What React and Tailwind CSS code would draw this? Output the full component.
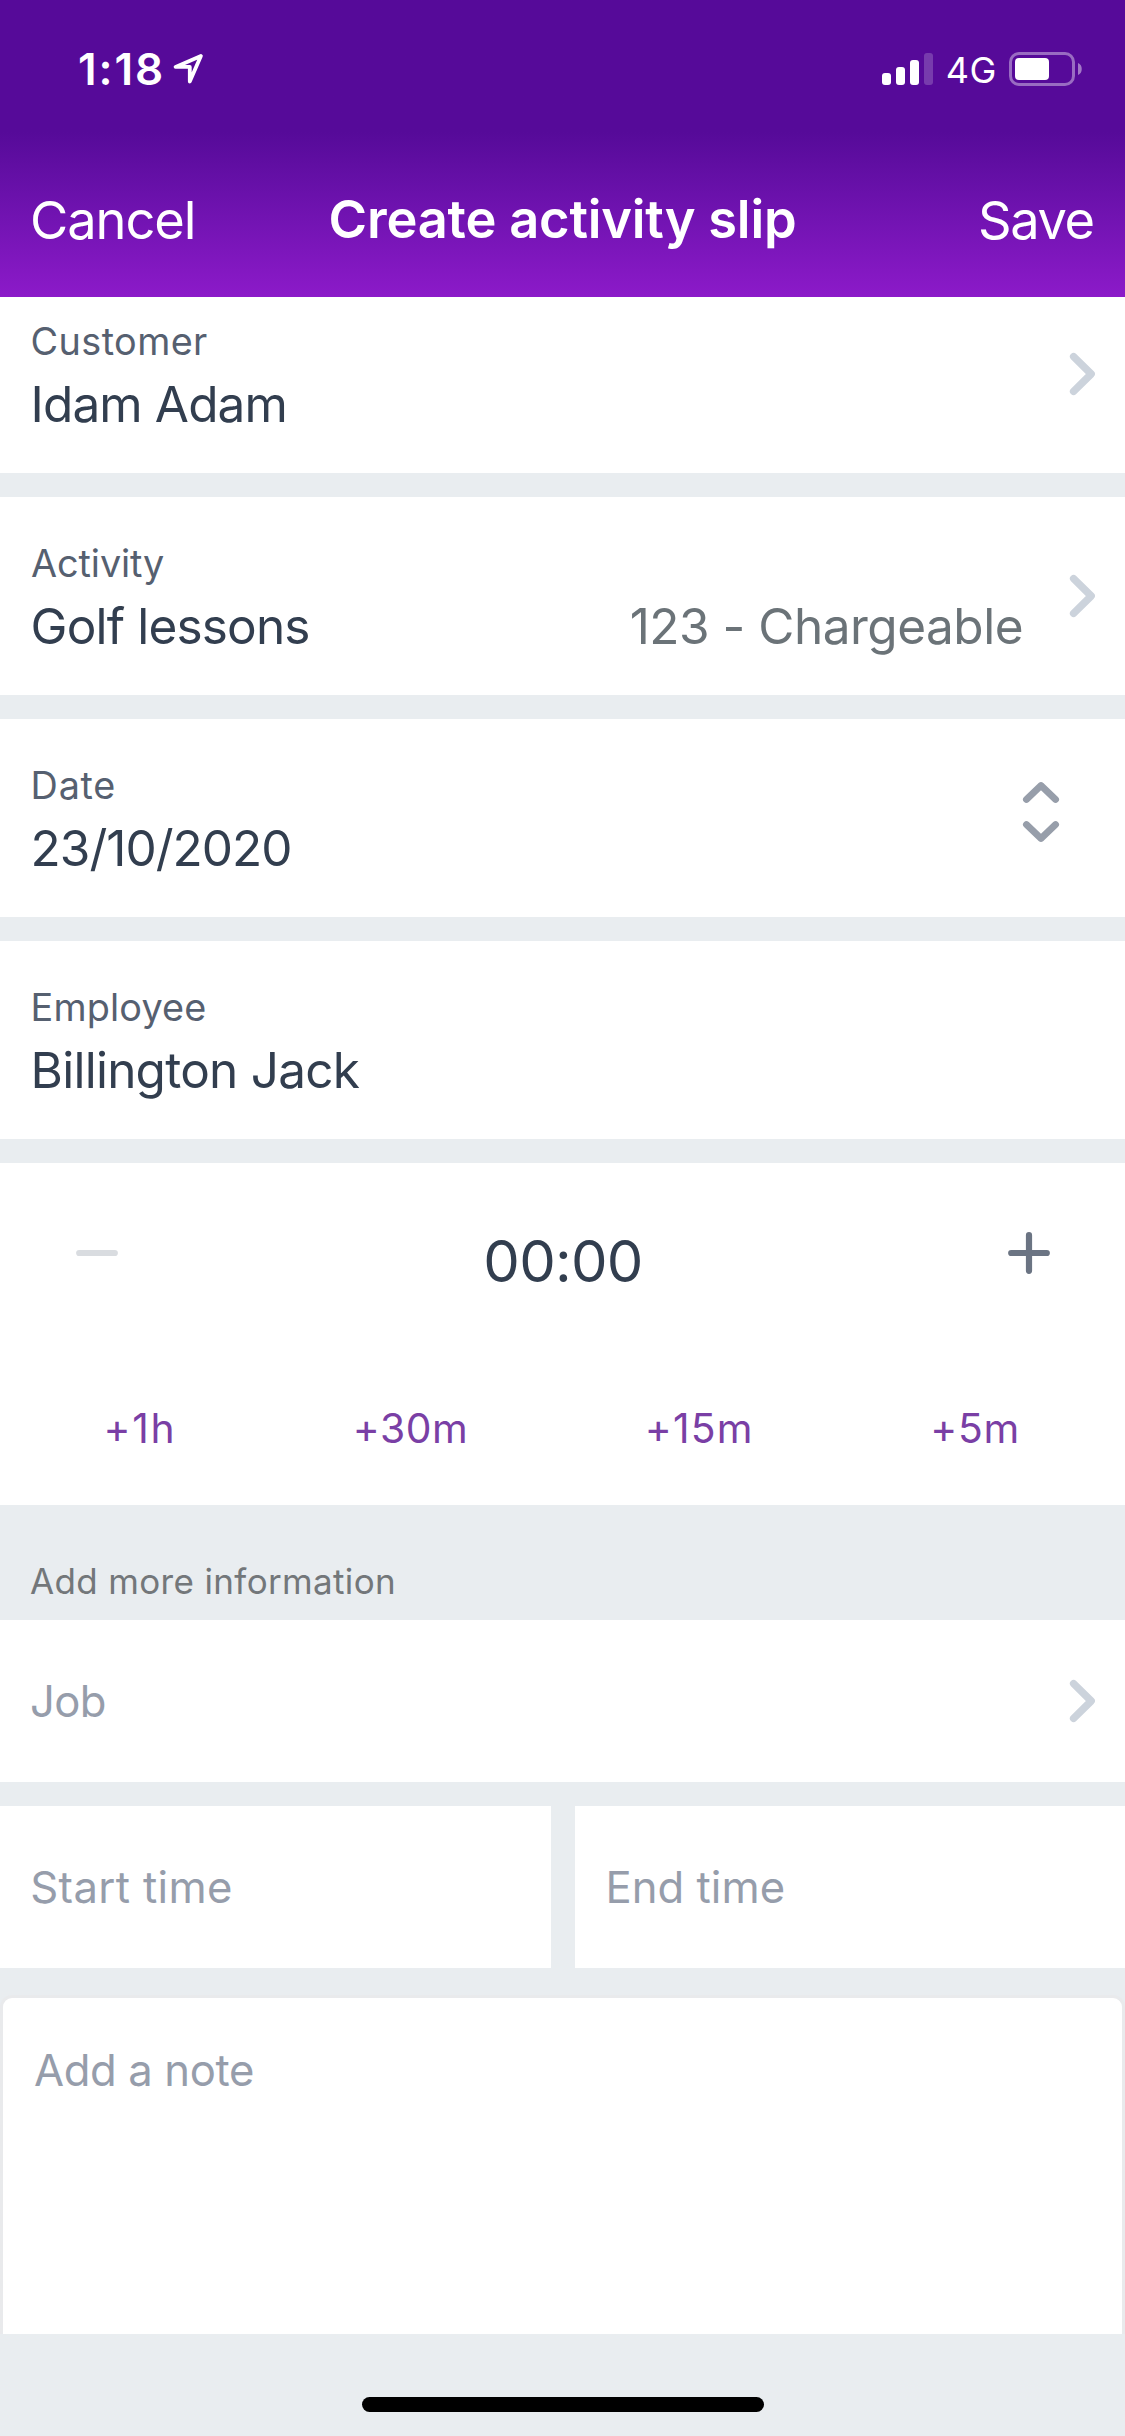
function LocationArrow() {
  return (
    <svg className="mt-[53px] ml-[7px] h-[32px] w-[32px]" viewBox="0 0 32 32" fill="none" stroke="#fff" strokeWidth="3.8" strokeLinejoin="round">
      <path d="M28.9 2.9 L3.6 13.9 L17.8 13.9 L17.8 28.6 Z" />
    </svg>
  );
}

function SignalBars() {
  return (
    <div className="mt-[53px] flex h-[32px] items-end gap-[5px]">
      <div className="h-[12px] w-[9px] rounded-[3px] bg-white" />
      <div className="h-[18px] w-[9px] rounded-[3px] bg-white" />
      <div className="h-[25px] w-[9px] rounded-[3px] bg-white" />
      <div className="h-[32px] w-[9px] rounded-[3px] bg-white/20" />
    </div>
  );
}

function Battery() {
  return (
    <svg className="mt-[52px] ml-[12px] h-[34px] w-[74px]" viewBox="0 0 74 34" fill="none">
      <rect x="1.5" y="1.5" width="63" height="31" rx="8.5" stroke="#fff" strokeOpacity="0.4" strokeWidth="3" />
      <rect x="6" y="6" width="34" height="22" rx="4" fill="#fff" />
      <path d="M69 11 C74 12.5 74 21.5 69 23 Z" fill="#fff" fillOpacity="0.45" />
    </svg>
  );
}

function ChevronRight() {
  return (
    <svg className="h-[44px] w-[28px] shrink-0" viewBox="0 0 28 44" fill="none" stroke="#ccd3dc" strokeWidth="7.4" strokeLinecap="round" strokeLinejoin="round">
      <path d="M4.6 4.6 L22.2 22 L4.6 39.4" />
    </svg>
  );
}

function UpDown() {
  return (
    <svg className="mb-[12px] h-[62px] w-[38px]" viewBox="0 0 38 62" fill="none" stroke="#979eaa" strokeWidth="6.8" strokeLinecap="round" strokeLinejoin="round">
      <path d="M4.4 18.5 L19 4.5 L33.6 18.5" />
      <path d="M4.4 43.5 L19 57.5 L33.6 43.5" />
    </svg>
  );
}

function Field({ label, labelClass, value, valueClass, className = "", children }) {
  return (
    <div className={`flex h-[198px] shrink-0 items-center bg-white pl-[30.6px] ${className}`}>
      <div className="mt-[42px] flex-1 self-start">
        <div className={`text-[37.8px] leading-[48px] text-[#566070] ${labelClass}`}>{label}</div>
        <div className={`mt-[9px] text-[49.5px] leading-[60px] text-[#323e4f] ${valueClass}`}>{value}</div>
      </div>
      {children}
    </div>
  );
}

export default function App() {
  return (
    <div className="flex h-[2436px] w-[1125px] flex-col overflow-hidden bg-[#e9edf0] font-['Inter',sans-serif] whitespace-nowrap">
      <header className="relative z-10 h-[297px] shrink-0 bg-linear-to-b from-[#560a99] from-[132px] to-[#8c1ac9] text-white">
        <div className="flex h-[132px] justify-between pr-[42px] pl-[78px]">
          <div className="flex">
            <span className="mt-[43px] text-[44px] leading-[52px] font-semibold tracking-[1.9px]">1:18</span>
            <LocationArrow />
          </div>
          <div className="flex">
            <SignalBars />
            <span className="mt-[48px] ml-[12.5px] text-[36px] leading-[44px] tracking-[0.6px]">4G</span>
            <Battery />
          </div>
        </div>
        <div className="grid grid-cols-[1fr_auto_1fr] px-[30px] pt-[55px] text-[52.4px] leading-[64px]">
          <span className="mt-px tracking-[-1.05px]">Cancel</span>
          <span className="font-semibold tracking-[-0.2px]">Create activity slip</span>
          <span className="mt-px pr-[1.5px] text-right tracking-[-1.43px]">Save</span>
        </div>
      </header>

      <Field label="Customer" labelClass="tracking-[0.4px]" value="Idam Adam" valueClass="tracking-[-0.88px]" className="-mt-[22px] pr-[28px]">
        <ChevronRight />
      </Field>

      <Field label="Activity" labelClass="pl-[0.5px] tracking-[-0.1px]" value="Golf lessons" valueClass="tracking-[-0.83px]" className="mt-[24px] pr-[28px]">
        <span className="mt-[99px] mr-[46px] self-start text-[49.5px] leading-[60px] tracking-[-0.49px] text-[#6b7378]">123 - Chargeable</span>
        <ChevronRight />
      </Field>

      <Field label="Date" labelClass="tracking-[0.76px]" value="23/10/2020" valueClass="tracking-[-0.97px]" className="mt-[24px] pr-[65px]">
        <UpDown />
      </Field>

      <Field label="Employee" labelClass="tracking-[0.16px]" value="Billington Jack" valueClass="tracking-[-0.76px]" className="mt-[24px]" />

      <section className="mt-[24px] h-[342px] shrink-0 bg-white">
        <div className="flex h-[240px] justify-between pr-[75px] pl-[76px]">
          <svg className="mt-[69px] h-[42px] w-[42px]" viewBox="0 0 42 42" stroke="#d9dce0" strokeWidth="6.2" strokeLinecap="round">
            <path d="M3.2 21 H38.8" />
          </svg>
          <span className="mt-[62px] text-[58px] leading-[72px] tracking-[-0.75px] text-[#323e4f]">00:00</span>
          <svg className="mt-[69px] h-[42px] w-[42px]" viewBox="0 0 42 42" stroke="#6b7483" strokeWidth="6.2" strokeLinecap="round">
            <path d="M3.2 21 H38.8 M21 3.2 V38.8" />
          </svg>
        </div>
        <div className="flex justify-between pr-[105px] pl-[103.5px] text-[40.8px] leading-[50px] text-[#7a3fa5]">
          <span className="tracking-[1.7px]">+1h</span>
          <span className="tracking-[0.57px]">+30m</span>
          <span className="tracking-[1.2px]">+15m</span>
          <span className="tracking-[0.75px]">+5m</span>
        </div>
      </section>

      <h2 className="h-[115px] shrink-0 pt-[54px] pl-[30px] text-[35px] leading-[44px] tracking-[0.35px] text-[#73777a]">Add more information</h2>

      <div className="flex h-[162px] shrink-0 items-center justify-between bg-white pr-[28px] pl-[30px] text-[43.6px] leading-[60px] text-[#969dab]">
        <span className="pt-[2px] tracking-[-0.61px]">Job</span>
        <ChevronRight />
      </div>

      <div className="mt-[24px] grid h-[162px] shrink-0 grid-cols-[551px_550px] gap-[24px] text-[43.6px] leading-[60px] text-[#969dab]">
        <div className="flex items-center bg-white pt-[2px] pl-[30.3px] tracking-[0.35px]">Start time</div>
        <div className="flex items-center bg-white pt-[2px] pl-[30.6px] tracking-[0.02px]">End time</div>
      </div>

      <div className="mt-[27px] h-[339px] shrink-0 rounded-t-[12px] border-3 border-b-0 border-[#e9eaec] bg-white pt-[43px] pl-[31px] text-[43.6px] leading-[60px] tracking-[-0.36px] text-[#969dab]">
        Add a note
      </div>

      <div className="mx-auto mt-[63px] h-[15px] w-[402px] shrink-0 rounded-full bg-black" />
    </div>
  );
}
